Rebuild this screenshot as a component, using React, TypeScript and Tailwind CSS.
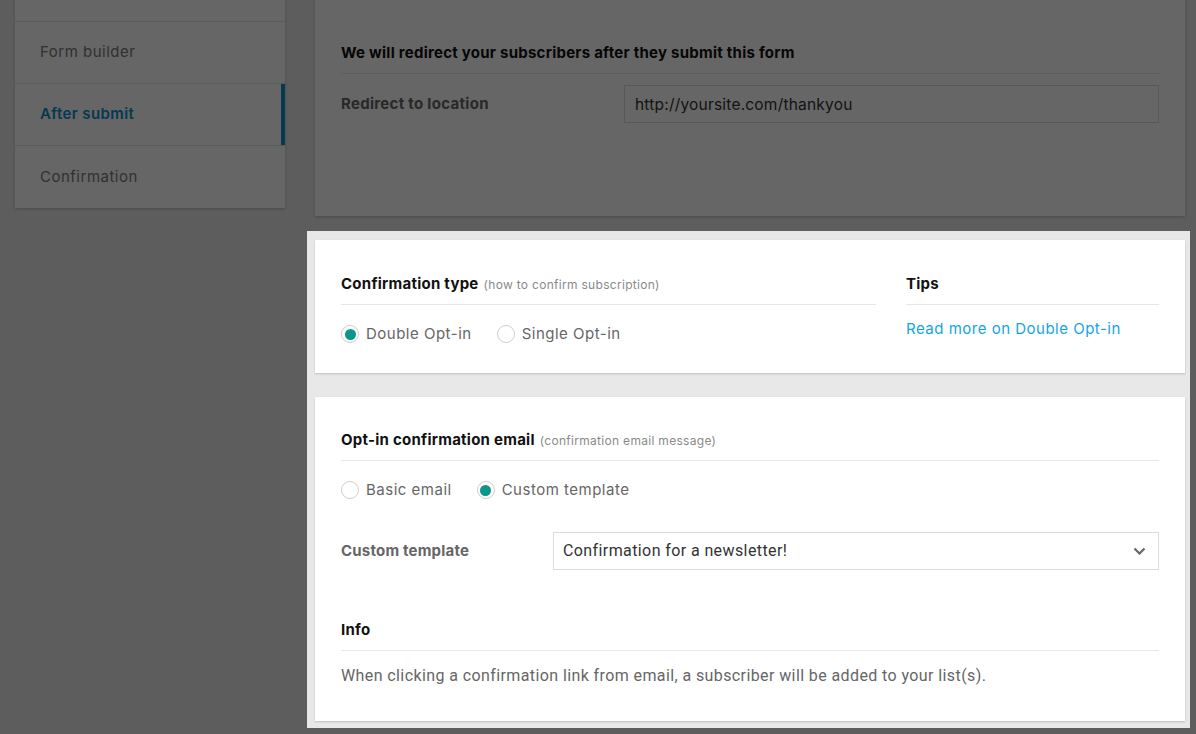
const sans = "font-['Inter','Noto_Sans',sans-serif]"

function Radio({ checked, label }: { checked?: boolean; label: string }) {
  return (
    <label className="flex items-center gap-[7px] text-[15px] leading-6 tracking-[0.5px] text-[#666]">
      <span className="flex h-[18px] w-[18px] items-center justify-center rounded-full border border-[#cfcfcf] bg-white">
        {checked && <span className="h-[11px] w-[11px] rounded-full bg-[#0a9688]" />}
      </span>
      {label}
    </label>
  )
}

function SectionTitle({ title, hint }: { title: string; hint?: string }) {
  return (
    <div className="border-b border-[#e6e6e6] pb-[10px] leading-5">
      <span className="text-[15px] font-bold tracking-[0.25px] text-[#111]">{title}</span>
      {hint && <span className="ml-[5px] text-[12px] leading-[1] tracking-[0.3px] text-[#8a8a8a]">{hint}</span>}
    </div>
  )
}

// first entry sits above the fold (page is scrolled), only its bottom border shows
const navItems = ['', 'Form builder', 'After submit', 'Confirmation']

export default function App() {
  return (
    <div className={`flex h-[734px] flex-col overflow-hidden bg-[#e8e8e8] ${sans}`}>
      <div className="-mt-[40px] flex gap-[30px] pl-[15px] pr-[11px]">
        {/* sidebar */}
        <aside className="w-[270px] shrink-0 self-start bg-white shadow-[0_1px_3px_rgba(0,0,0,0.2)]">
          {navItems.map((item, i) => {
            const active = item === 'After submit'
            return (
              <div
                key={i}
                className={`flex h-[62px] items-stretch ${i < navItems.length - 1 ? 'border-b border-[#e3e3e3]' : ''}`}
              >
                <span
                  className={`flex flex-1 items-center pl-[25px] text-[15px] ${active ? 'font-semibold tracking-[0.4px] text-[#0d8ec9]' : 'tracking-[0.5px] text-[#7a7a7a]'}`}
                >
                  {item}
                </span>
                {active && <span className="w-1 bg-[#0d8ec9]" />}
              </div>
            )
          })}
        </aside>

        {/* main column */}
        <main className="flex flex-1 flex-col">
          <section className="mb-[15px] bg-white px-[26px] pb-[93px] pt-[82px] shadow-[0_1px_3px_rgba(0,0,0,0.2)]">
            <SectionTitle title="We will redirect your subscribers after they submit this form" />
            <div className="mt-[11px] grid grid-cols-[283px_1fr] items-center">
              <span className="text-[15px] font-bold tracking-[0.3px] text-[#666]">Redirect to location</span>
              <input
                readOnly
                value="http://yoursite.com/thankyou"
                className="h-[38px] border border-[#dcdcdc] px-[10px] text-[15.5px] tracking-[0.2px] text-[#333] outline-none"
              />
            </div>
          </section>

          {/* highlighted step */}
          <div className="relative z-10 -ml-2 -mr-[5px] flex flex-col gap-6 bg-[#e8e8e8] pb-[7px] pl-2 pr-[5px] pt-[9px] shadow-[0_0_0_9999px_rgba(0,0,0,0.6)]">
            <section className="bg-white px-[26px] pb-[27px] pt-[33px] shadow-[0_1px_2px_rgba(0,0,0,0.18)]">
              <div className="grid grid-cols-[535px_1fr] gap-[30px]">
                <div>
                  <SectionTitle title="Confirmation type" hint="(how to confirm subscription)" />
                  <div className="mt-[17px] flex gap-[25px]">
                    <Radio checked label="Double Opt-in" />
                    <Radio label="Single Opt-in" />
                  </div>
                </div>
                <div>
                  <SectionTitle title="Tips" />
                  <a className="mt-[14px] block text-[15px] leading-5 tracking-[0.5px] text-[#12a5e6]">
                    Read more on Double Opt-in
                  </a>
                </div>
              </div>
            </section>

            <section className="bg-white px-[26px] pb-[35px] pt-[32px] shadow-[0_1px_2px_rgba(0,0,0,0.18)]">
              <SectionTitle title="Opt-in confirmation email" hint="(confirmation email message)" />
              <div className="mt-[17px] flex gap-[25px]">
                <Radio label="Basic email" />
                <Radio checked label="Custom template" />
              </div>
              <div className="mt-[30px] grid grid-cols-[212px_1fr] items-center">
                <span className="text-[15px] font-bold tracking-[0.2px] text-[#666]">Custom template</span>
                <div className="flex h-[38px] items-center justify-between border border-[#dcdcdc] pl-[9px] pr-[12px]">
                  <span className="font-['Roboto',sans-serif] text-[16px] tracking-[0.4px] text-[#333]">
                    Confirmation for a newsletter!
                  </span>
                  <svg width="13" height="9" viewBox="0 0 13 9" fill="none">
                    <path d="M1.5 1.5 6.5 6.5 11.5 1.5" stroke="#666" strokeWidth="2.2" />
                  </svg>
                </div>
              </div>
              <div className="mt-[49px]">
                <SectionTitle title="Info" />
                <p className="mt-[15px] font-['Roboto',sans-serif] text-[16px] leading-5 tracking-[0.4px] text-[#666]">
                  When clicking a confirmation link from email, a subscriber will be added to your list(s).
                </p>
              </div>
            </section>
          </div>
        </main>
      </div>
    </div>
  )
}
